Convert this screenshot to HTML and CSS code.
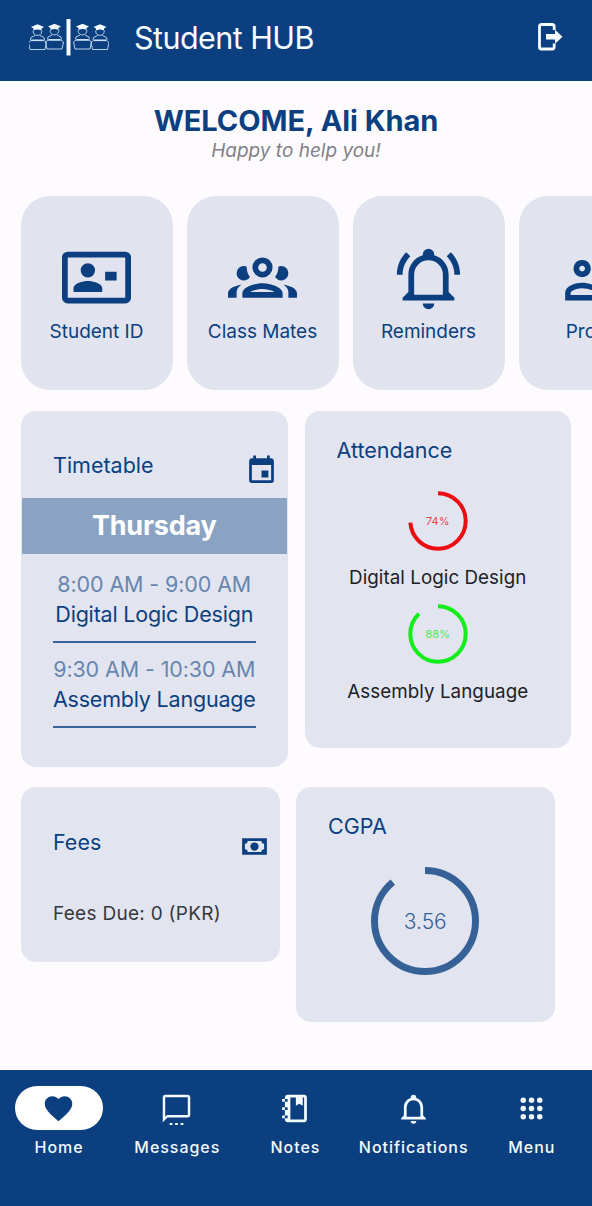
FILE: index.html
```html
<!DOCTYPE html>
<html lang="en">
<head>
<meta charset="utf-8">
<title>Student HUB</title>
<link rel="stylesheet" href="styles.css">
</head>
<body>
<header class="topbar">
  <svg class="logo" viewBox="0 0 80 38" width="80" height="38">
    <defs>
      <g id="grad">
        <path class="solid" d="M-6.5 8 0 5.2 6.5 8 4 9.4V11.4Q0 9.8-4 11.4V9.4Z"/>
        <path d="M-4.3 11.5C-5 18 4.8 18 4.3 11.5M-2.5 16.5-6.5 18.500-7 21M2.500 16.500 6.500 18.500 7 21M-6.500 21.500H6.500L9 23.500 7.500 30.500H-7.500L-9 23.500Z"/>
        <path class="bold" d="M-6 21.300H6"/>
      </g>
    </defs>
    <use href="#grad" x="8.500" y="1"/>
    <use href="#grad" x="25.500" y="0.500"/>
    <path class="solid" d="M37.500 1h4v36.500h-4z"/>
    <use href="#grad" x="53.500" y="0.500"/>
    <use href="#grad" x="71" y="1"/>
  </svg>
  <h1 class="brand">Student HUB</h1>
  <svg class="exit" viewBox="0 0 26 30" width="26" height="30">
    <path class="frame" d="M17.200 8V4.500Q17.200 2.500 15.200 2.500H4.500Q2.500 2.500 2.500 4.500V25Q2.500 27 4.500 27H15.200Q17.200 27 17.200 25V21.500"/>
    <path d="M9 12H18V7.800L25.500 14.800 18 21.800V17.600H9Z"/>
  </svg>
</header>
<main>
  <section class="welcome">
    <h2 class="welcome-title">WELCOME, Ali Khan</h2>
    <p class="welcome-sub">Happy to help you!</p>
  </section>
  <section class="quick">
    <div class="tile">
      <svg viewBox="0 0 24 24"><path fill-rule="evenodd" d="M2,3H22A2,2 0 0,1 24,5V19A2,2 0 0,1 22,21H2A2,2 0 0,1 0,19V5A2,2 0 0,1 2,3M2,5V19H22V5H2M14,17V15.750C14,14.090 10.660,13.250 9,13.250C7.340,13.250 4,14.090 4,15.750V17H14M9,7A2.500,2.500 0 0,0 6.500,9.500A2.500,2.500 0 0,0 9,12A2.500,2.500 0 0,0 11.500,9.500A2.500,2.500 0 0,0 9,7M15,10V13H19V10H15Z"/></svg>
      <span>Student ID</span>
    </div>
    <div class="tile">
      <svg viewBox="0 0 24 24"><path d="M12,5A3.500,3.500 0 0,0 8.500,8.500A3.500,3.500 0 0,0 12,12A3.500,3.500 0 0,0 15.500,8.500A3.500,3.500 0 0,0 12,5M12,7A1.500,1.500 0 0,1 13.500,8.500A1.500,1.500 0 0,1 12,10A1.500,1.500 0 0,1 10.500,8.500A1.500,1.500 0 0,1 12,7M5.500,8A2.500,2.500 0 0,0 3,10.500C3,11.440 3.530,12.250 4.290,12.680C4.650,12.880 5.060,13 5.500,13C5.940,13 6.350,12.880 6.710,12.680C7.080,12.470 7.390,12.170 7.620,11.810C6.890,10.860 6.500,9.700 6.500,8.500C6.500,8.410 6.500,8.310 6.500,8.220C6.200,8.080 5.860,8 5.500,8M18.500,8C18.140,8 17.800,8.080 17.500,8.220C17.500,8.310 17.500,8.410 17.500,8.500C17.500,9.700 17.110,10.860 16.380,11.810C16.500,12 16.630,12.150 16.780,12.300C16.940,12.450 17.100,12.580 17.290,12.680C17.650,12.880 18.060,13 18.500,13C18.940,13 19.350,12.880 19.710,12.680C20.470,12.250 21,11.440 21,10.500A2.500,2.500 0 0,0 18.500,8M12,14C9.660,14 5,15.170 5,17.500V19H19V17.500C19,15.170 14.340,14 12,14M4.710,14.550C2.780,14.780 0,15.760 0,17.500V19H3V17.070C3,16.060 3.690,15.220 4.710,14.550M19.290,14.550C20.310,15.220 21,16.060 21,17.070V19H24V17.500C24,15.760 21.220,14.780 19.290,14.550M12,16C13.530,16 15.240,16.500 16.230,17H7.770C8.760,16.500 10.470,16 12,16Z"/></svg>
      <span>Class Mates</span>
    </div>
    <div class="tile">
      <svg viewBox="0 0 24 24"><path d="M10,21H14A2,2 0 0,1 12,23A2,2 0 0,1 10,21M21,19V20H3V19L5,17V11C5,7.900 7.030,5.170 10,4.290C10,4.190 10,4.100 10,4A2,2 0 0,1 12,2A2,2 0 0,1 14,4C14,4.100 14,4.190 14,4.290C16.970,5.170 19,7.900 19,11V17L21,19M17,11A5,5 0 0,0 12,6A5,5 0 0,0 7,11V18H17V11M19.750,3.190L18.330,4.610C20.040,6.300 21,8.600 21,11H23C23,8.070 21.840,5.250 19.750,3.190M1,11H3C3,8.600 3.960,6.300 5.670,4.610L4.250,3.190C2.160,5.250 1,8.070 1,11Z"/></svg>
      <span>Reminders</span>
    </div>
    <div class="tile">
      <svg viewBox="0 0 24 24"><path fill-rule="evenodd" d="M7.700,5.900a3,3 0 1,0 .01,0M7.700,7.900a1,1 0 1,1-.01,0M7.700,13.800C5.500,13.800 1.800,14.900 1.800,17.300V20H14V17.300C14,14.900 10,13.800 7.700,13.800M7.700,15.700C9.500,15.700 12,16.500 12,17.300V18.100H3.700V17.300C3.700,16.500 6,15.700 7.700,15.700"/></svg>
      <span>Profile</span>
    </div>
  </section>
  <section class="row">
    <article class="card timetable">
      <div class="card-head">
        <h3 class="title">Timetable</h3>
        <svg class="icon" viewBox="0 0 24 24"><path d="M19,19H5V8H19M16,1V3H8V1H6V3H5C3.890,3 3,3.890 3,5V19A2,2 0 0,0 5,21H19A2,2 0 0,0 21,19V5C21,3.890 20.100,3 19,3H18V1M17,12H12V17H17V12Z"/></svg>
      </div>
      <div class="day">Thursday</div>
      <ul class="slots">
        <li class="slot"><span class="time">8:00 AM - 9:00 AM</span><span>Digital Logic Design</span></li>
        <li class="slot"><span class="time">9:30 AM - 10:30 AM</span><span>Assembly Language</span></li>
      </ul>
    </article>
    <article class="card attendance">
      <h3 class="title">Attendance</h3>
      <div class="meter">
        <div class="ring red">
          <svg viewBox="0 0 60 60"><circle cx="30" cy="30" r="27.700" pathLength="100" stroke-dasharray="74 26"/></svg>
          <span>74%</span>
        </div>
        <p>Digital Logic Design</p>
      </div>
      <div class="meter">
        <div class="ring green">
          <svg viewBox="0 0 60 60"><circle cx="30" cy="30" r="27.700" pathLength="100" stroke-dasharray="88 12"/></svg>
          <span>88%</span>
        </div>
        <p>Assembly Language</p>
      </div>
    </article>
  </section>
  <section class="row lower">
    <article class="card fees">
      <div class="card-head">
        <h3 class="title">Fees</h3>
        <svg class="icon" viewBox="0 0 24 24"><path fill-rule="evenodd" d="M3,6H21V18H3V6M12,9A3,3 0 0,1 15,12A3,3 0 0,1 12,15A3,3 0 0,1 9,12A3,3 0 0,1 12,9M7,8A2,2 0 0,1 5,10V14A2,2 0 0,1 7,16H17A2,2 0 0,1 19,14V10A2,2 0 0,1 17,8H7Z"/></svg>
      </div>
      <p class="due">Fees Due: 0 (PKR)</p>
    </article>
    <article class="card cgpa">
      <h3 class="title">CGPA</h3>
      <div class="ring blue">
        <svg viewBox="0 0 108 108"><circle cx="54" cy="54" r="50.500" pathLength="100" stroke-dasharray="89 11"/></svg>
        <span>3.56</span>
      </div>
    </article>
  </section>
</main>
<nav class="tabs">
  <a class="tab active"><i class="pill"><svg viewBox="0 0 24 24"><path d="M12,21.350L10.550,20.030C5.400,15.360 2,12.270 2,8.500C2,5.410 4.420,3 7.500,3C9.240,3 10.910,3.810 12,5.080C13.090,3.810 14.760,3 16.500,3C19.580,3 22,5.410 22,8.500C22,12.270 18.600,15.360 13.450,20.030L12,21.350Z"/></svg></i><span>Home</span></a>
  <a class="tab"><i class="pill"><svg viewBox="0 0 24 24"><path fill-rule="evenodd" d="M7,22.500H9V24.500H7V22.500M15,22.500H17V24.500H15V22.500M11,22.500H13V24.500H11V22.500M20,2H4A2,2 0 0,0 2,4V22L5.500,18.500H20A2,2 0 0,0 22,16.500V4A2,2 0 0,0 20,2M20.200,16.700H5.170L3.800,18V3.800H20.200V16.700"/></svg></i><span>Messages</span></a>
  <a class="tab"><i class="pill"><svg viewBox="0 0 24 24"><path fill-rule="evenodd" d="M3,7V5H5V4C5,2.890 5.900,2 7,2H19C20.050,2 21,2.950 21,4V20C21,21.050 20.050,22 19,22H7C5.950,22 5,21.050 5,20V19H3V17H5V13H3V11H5V7H3M5,5V7H7V5H5M5,11V13H7V11H5M5,17V19H7V17H5M9,4V20H19V4H18V10L15.500,8.500L13,10V4H9Z"/></svg></i><span>Notes</span></a>
  <a class="tab"><i class="pill"><svg viewBox="0 0 24 24"><path d="M10,21H14A2,2 0 0,1 12,23A2,2 0 0,1 10,21M21,19V20H3V19L5,17V11C5,7.900 7.030,5.170 10,4.290C10,4.190 10,4.100 10,4A2,2 0 0,1 12,2A2,2 0 0,1 14,4C14,4.100 14,4.190 14,4.290C16.970,5.170 19,7.900 19,11V17L21,19M17,11A5,5 0 0,0 12,6A5,5 0 0,0 7,11V18H17V11Z"/></svg></i><span>Notifications</span></a>
  <a class="tab"><i class="pill"><svg viewBox="0 0 24 24"><circle cx="6" cy="6" r="2"/><circle cx="12" cy="6" r="2"/><circle cx="18" cy="6" r="2"/><circle cx="6" cy="12" r="2"/><circle cx="12" cy="12" r="2"/><circle cx="18" cy="12" r="2"/><circle cx="6" cy="18" r="2"/><circle cx="12" cy="18" r="2"/><circle cx="18" cy="18" r="2"/></svg></i><span>Menu</span></a>
</nav>
</body>
</html>
```
FILE: styles.css
```css
* { box-sizing: border-box; margin: 0; padding: 0; }
body {
  width: 592px;
  height: 1206px;
  overflow: hidden;
  display: flex;
  flex-direction: column;
  background: #fefbff;
  color: #0b3f80;
  font-family: Inter, "Liberation Sans", sans-serif;
}
svg { display: block; fill: currentColor; flex: none; }
h1, h2, h3 { font-weight: 400; }
p, span, h1, h2, h3 { white-space: nowrap; }

.topbar {
  height: 81px;
  flex: none;
  display: flex;
  align-items: flex-start;
  padding: 18px 29px 0 29px;
  background: #0b3f80;
  color: #f6fdff;
}
.logo { fill: none; stroke: #c9e2f7; stroke-width: 0.9; }
.logo .solid { fill: #f4fcff; stroke: none; }
.logo .bold { stroke-width: 1.6; }
.brand { margin-left: 25px; font-size: 30.5px; line-height: 40px; letter-spacing: -0.55px; }
.exit { margin: 4px 0 0 auto; }
.exit .frame { fill: none; stroke: currentColor; stroke-width: 2.8; }

main { flex: 1; min-height: 0; }
.welcome { height: 115px; padding-top: 21px; text-align: center; }
.welcome-title { font-size: 29px; font-weight: 700; line-height: 37px; letter-spacing: -0.05px; }
.welcome-sub { font-size: 19px; font-style: italic; line-height: 24px; color: #828087; }

.quick { display: flex; gap: 14px; padding-left: 20.500px; overflow: hidden; }
.tile {
  flex: none;
  width: 152px;
  height: 194px;
  border-radius: 29px;
  background: #e1e3ee;
  display: flex;
  flex-direction: column;
  align-items: center;
  padding-top: 47px;
}
.tile svg { width: 69px; height: 69px; margin-right: 1px; }
.tile span { margin-top: 6.500px; font-size: 19px; line-height: 25px; letter-spacing: -0.02px; }

.row { display: flex; align-items: flex-start; gap: 17px; padding: 21px 0 0 21px; }
.card { border-radius: 15px; background: #e2e5f0; }
.title { font-size: 21.5px; line-height: 28px; }
.card-head { display: flex; justify-content: space-between; padding-left: 32px; }
.icon { width: 33px; height: 33px; }

.timetable { width: 266.500px; height: 356px; }
.timetable .card-head { height: 87px; padding-top: 40px; padding-right: 10px; }
.timetable .icon { margin-top: 2.500px; }
.day {
  height: 56px;
  margin: 0 1px;
  background: #8ba3c3;
  color: #fff;
  font-size: 27px;
  font-weight: 700;
  line-height: 56px;
  letter-spacing: -0.2px;
  text-align: center;
}
.slots { list-style: none; padding: 16px 32px 0; }
.slot {
  height: 85.300px;
  display: flex;
  flex-direction: column;
  align-items: center;
}
.slot span { font-size: 21.5px; line-height: 29.500px; letter-spacing: -0.2px; }
.slot .time { letter-spacing: -0.12px; color: #6885ae; }
.slot::after { content: ""; width: 203px; height: 2px; margin-top: 12px; background: #38639a; }

.attendance { width: 266.500px; height: 337px; padding-top: 25px; }
.attendance .title { padding-left: 32px; }
.meter { height: 113.500px; display: flex; flex-direction: column; align-items: center; }
.title + .meter { margin-top: 26.500px; }
.meter p { margin-top: 14.500px; font-size: 18.800px; line-height: 25px; letter-spacing: 0.05px; color: #202127; }
.ring { display: grid; width: 60px; height: 60px; place-items: center; }
.ring svg, .ring span { grid-area: 1 / 1; }
.ring svg { width: 100%; height: 100%; }
.ring circle { fill: none; stroke: currentColor; stroke-width: 4; transform: rotate(-90deg); transform-origin: center; }
.ring span { font-size: 11px; opacity: 0.75; }
.red { color: #ed0c12; }
.green { color: #11ee19; }

.lower { gap: 16.500px; padding-top: 20px; }
.fees { width: 258.500px; height: 174.500px; }
.fees .card-head { padding-top: 41px; padding-right: 9px; }
.fees .icon { margin-top: 2px; }
.due { margin: 37.500px 0 0 32px; font-size: 19px; line-height: 25px; letter-spacing: 0.28px; color: #36383f; }
.cgpa { width: 258.500px; height: 235px; padding-top: 25px; }
.cgpa .title { padding-left: 32px; }
.blue { width: 108px; height: 108px; margin: 27px auto 0; color: #366197; }
.blue circle { stroke-width: 7; }
.blue span { font-size: 21px; font-weight: 300; opacity: 1; }

.tabs { height: 136.500px; flex: none; display: flex; padding-top: 16.500px; background: #0b3f80; color: #f2fbff; }
.tab { width: 118.200px; display: flex; flex-direction: column; align-items: center; }
.pill { width: 88.500px; height: 44px; border-radius: 22px; display: grid; place-items: center; }
.pill svg { width: 33px; height: 33px; margin-right: 1px; }
.active .pill { background: #fff; color: #0b3f80; }
.tab span { margin-top: 5px; font-size: 16px; font-weight: 500; line-height: 24px; letter-spacing: 0.95px; }
```
